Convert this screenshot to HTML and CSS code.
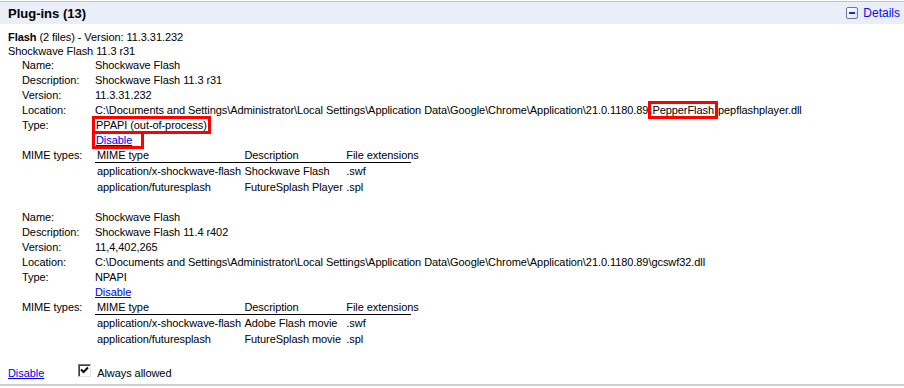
FILE: index.html
```html
<!DOCTYPE html>
<html lang="en">
<head>
<meta charset="UTF-8">
<title>Plug-ins</title>
<link rel="stylesheet" href="styles.css">
</head>
<body>
    <!-- Section header -->
    <div class="section-header">
        <h2>Plug-ins (13)</h2>
        <a class="details-toggle" href="#">
            <span class="toggle-icon"></span>Details
        </a>
    </div>

    <div class="plugin">
        <div class="plugin-title"><b>Flash</b> (2 files) - Version: 11.3.31.232</div>
        <div class="plugin-title">Shockwave Flash 11.3 r31</div>

        <!-- File 1 -->
        <div class="plugin-file">
            <div class="label">Name:</div><div>Shockwave Flash</div>
            <div class="label">Description:</div><div>Shockwave Flash 11.3 r31</div>
            <div class="label">Version:</div><div>11.3.31.232</div>
            <div class="label">Location:</div>
            <div>C:\Documents and Settings\Administrator\Local Settings\Application Data\Google\Chrome\Application\21.0.1180.89\<span class="mark">PepperFlash</span>\pepflashplayer.dll</div>
            <div class="label">Type:</div><div><span class="mark">PPAPI (out-of-process)</span></div>
            <div></div><div><span class="mark mark-wide"><a href="#">Disable</a></span></div>
            <div class="label">MIME types:</div>
            <div>
                <table class="mime-table">
                    <tr><th>MIME type</th><th>Description</th><th>File extensions</th></tr>
                    <tr><td>application/x-shockwave-flash</td><td>Shockwave Flash</td><td>.swf</td></tr>
                    <tr><td>application/futuresplash</td><td>FutureSplash Player</td><td>.spl</td></tr>
                </table>
            </div>
        </div>

        <!-- File 2 -->
        <div class="plugin-file">
            <div class="label">Name:</div><div>Shockwave Flash</div>
            <div class="label">Description:</div><div>Shockwave Flash 11.4 r402</div>
            <div class="label">Version:</div><div>11,4,402,265</div>
            <div class="label">Location:</div>
            <div>C:\Documents and Settings\Administrator\Local Settings\Application Data\Google\Chrome\Application\21.0.1180.89\gcswf32.dll</div>
            <div class="label">Type:</div><div>NPAPI</div>
            <div></div><div><a href="#">Disable</a></div>
            <div class="label">MIME types:</div>
            <div>
                <table class="mime-table">
                    <tr><th>MIME type</th><th>Description</th><th>File extensions</th></tr>
                    <tr><td>application/x-shockwave-flash</td><td>Adobe Flash movie</td><td>.swf</td></tr>
                    <tr><td>application/futuresplash</td><td>FutureSplash movie</td><td>.spl</td></tr>
                </table>
            </div>
        </div>

        <div class="plugin-actions">
            <a href="#">Disable</a>
            <label class="always-allowed">
                <span class="checkbox">
                    <svg width="9" height="9" viewBox="0 0 9 9"><path d="M1 3.5 L3.5 6 L8 1.5" fill="none" stroke="#000" stroke-width="2"/></svg>
                </span>
                Always allowed
            </label>
        </div>
    </div>
</body>
</html>
```

FILE: styles.css
```css
/* General */
body {
    margin: 0;
    font-family: 'Liberation Sans', Arial, sans-serif;
    font-size: 11px;
    line-height: 15px;
    letter-spacing: -0.07px;
    color: #000;
    background: #fff;
}

a {
    color: #0000ee;
}

/* Header */
.section-header {
    display: flex;
    justify-content: space-between;
    align-items: center;
    margin-top: 1px;
    height: 22px;
    padding: 0 4px 0 8px;
    border-top: 1px solid #b8c3e2;
    background: #eaeef9;
}

.section-header h2 {
    margin: 0;
    font-size: 13px;
    font-weight: bold;
    letter-spacing: 0;
}

.details-toggle {
    display: flex;
    align-items: center;
    gap: 5px;
    color: #0c0cf0;
    text-decoration: none;
    font-size: 12px;
    letter-spacing: 0;
}

.toggle-icon {
    position: relative;
    width: 10px;
    height: 10px;
    border: 1px solid #6b77a6;
    border-radius: 2px;
    background: linear-gradient(135deg, #fff, #dfe3f2);
}

.toggle-icon::after {
    content: "";
    position: absolute;
    left: 2px;
    right: 2px;
    top: 4px;
    height: 2px;
    background: #1c2bd6;
}

/* Plugin */
.plugin {
    padding: 6px 8px 0;
}

.plugin-title {
    line-height: 14px;
}

.plugin-file {
    display: grid;
    grid-template-columns: 73px 1fr;
    padding-left: 14px;
    margin-bottom: 15px;
}

.label {
    white-space: nowrap;
}

/* Annotation boxes */
.mark {
    outline: 3px solid #f00;
    outline-offset: 0;
    padding: 0 1px;
}

.mark-wide {
    padding-right: 9px;
}

/* MIME table */
.mime-table {
    border-collapse: collapse;
    table-layout: fixed;
    width: 316px;
    white-space: nowrap;
}

.mime-table th {
    text-align: left;
    font-weight: normal;
    padding: 0 2px;
    line-height: 14px;
    border-bottom: 1px solid #000;
}

.mime-table td {
    padding: 1px 2px 0;
    line-height: 15px;
}

.mime-table th:nth-child(1) { width: 142px; }
.mime-table th:nth-child(2) { width: 97px; }
.mime-table th:nth-child(3) { width: 62px; }

/* Footer actions */
.plugin-actions {
    display: flex;
    align-items: center;
    margin: 0 -8px;
    padding: 4px 0 3px 8px;
    border-bottom: 2px solid #cfcfcf;
}

.always-allowed {
    display: flex;
    align-items: center;
    margin-left: 34px;
    gap: 6px;
}

.checkbox {
    display: flex;
    align-items: center;
    justify-content: center;
    width: 11px;
    height: 11px;
    border: 1px solid;
    border-color: #7a7a7a #e8e4d8 #e8e4d8 #7a7a7a;
    box-shadow: inset 1px 1px 0 #404040;
    background: #fff;
    margin-top: -6px;
}
```
